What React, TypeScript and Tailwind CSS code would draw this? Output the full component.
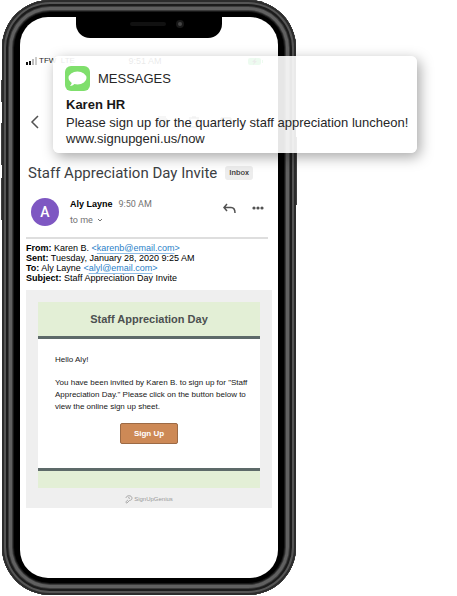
import type { ReactNode } from "react";

const SANS = "font-['Liberation_Sans',Arial,sans-serif]";

function StatusBar() {
  return (
    <div className="flex h-3 items-center justify-between pr-2 text-[8px] leading-3 text-neutral-800">
      <div className="flex w-20 items-center gap-[2px]">
        <svg className="h-2 w-[11px]" viewBox="0 0 11 8" aria-hidden="true">
          <rect x="0" y="5" width="2" height="3" fill="#111" />
          <rect x="3" y="4" width="2" height="4" fill="#111" />
          <rect x="6" y="2" width="2" height="6" fill="#bbb" />
          <rect x="9" y="0" width="2" height="8" fill="#ccc" />
        </svg>
        <span>TFW&nbsp; LTE</span>
      </div>
      <span className="text-[9px]">9:51 AM</span>
      <div className="flex w-20 justify-end">
        <svg className="h-[7px] w-4" viewBox="0 0 16 7" aria-hidden="true">
          <rect width="13" height="7" rx="2" fill="#4cd964" />
          <rect x="14" y="2" width="1" height="3" fill="#4cd964" />
          <path d="M8 0L4 4h2L5 7l4-4H7z" fill="#333" />
        </svg>
      </div>
    </div>
  );
}

function Toolbar() {
  return (
    <div className="flex h-5 items-center justify-between pl-1 pr-10 text-neutral-600">
      <button type="button" aria-label="Back" className="flex size-4 items-center">
        <svg className="h-[14px] w-[9px]" viewBox="0 0 9 14" fill="none" stroke="currentColor" strokeWidth="1.5" aria-hidden="true">
          <path d="M8 1L2 7l6 6" />
        </svg>
      </button>
      <div className="flex gap-5">
        <button type="button" aria-label="Archive">
          <svg className="size-3" viewBox="0 0 12 12" fill="none" stroke="currentColor" aria-hidden="true">
            <path d="M1 3h10v8H1zM2 1h8M6 5v4M4 7l2 2 2-2" />
          </svg>
        </button>
        <button type="button" aria-label="Delete">
          <svg className="size-3" viewBox="0 0 12 12" fill="none" stroke="currentColor" aria-hidden="true">
            <path d="M1 2h10M4 1h4M2 3v8h8V3" />
          </svg>
        </button>
        <button type="button" aria-label="Mark unread">
          <svg className="size-3" viewBox="0 0 12 12" fill="none" stroke="currentColor" aria-hidden="true">
            <path d="M1 2h10v8H1zM1 3l5 4 5-4" />
          </svg>
        </button>
      </div>
    </div>
  );
}

function Sender() {
  return (
    <div className="flex items-center pl-[5px] pr-2">
      <div className="flex size-7 shrink-0 items-center justify-center rounded-full bg-[#7e57c2] font-[Roboto,sans-serif] text-sm font-medium text-white">
        A
      </div>
      <div className="ml-[11px] flex-1">
        <div className="flex items-center gap-[6px] text-[9px] leading-4">
          <span className="font-bold text-black">Aly Layne</span>
          <span className="font-[Roboto,sans-serif] text-neutral-500">9:50 AM</span>
        </div>
        <button type="button" className="flex h-4 items-center gap-1 font-[Roboto,sans-serif] text-[9px] leading-4 text-neutral-500">
          to me
          <svg className="h-1 w-[6px]" viewBox="0 0 6 4" fill="none" stroke="currentColor" aria-hidden="true">
            <path d="M1 1l2 2 2-2" />
          </svg>
        </button>
      </div>
      <div className="flex items-center gap-4 pb-2 text-neutral-600">
        <button type="button" aria-label="Reply">
          <svg className="h-[11px] w-[14px]" viewBox="0 0 14 11" fill="none" stroke="currentColor" strokeWidth="1.5" aria-hidden="true">
            <path d="M5 1L2 4.500l3 3.500M2 4.500h7c3 0 4 2 4 5.500" />
          </svg>
        </button>
        <button type="button" aria-label="More">
          <svg className="h-[4px] w-3" viewBox="0 0 12 4" fill="currentColor" aria-hidden="true">
            <circle cx="2" cy="2" r="1.6" />
            <circle cx="6" cy="2" r="1.6" />
            <circle cx="10" cy="2" r="1.6" />
          </svg>
        </button>
      </div>
    </div>
  );
}

function Field({ label, children }: { label: string; children: ReactNode }) {
  return (
    <p>
      <b>{label}:</b> {children}
    </p>
  );
}

function Address({ email }: { email: string }) {
  return (
    <span className="text-[#2a7fc9]">
      &lt;
      <a href={`mailto:${email}`} className="underline decoration-[#8fbde6] underline-offset-2">
        {email}
      </a>
      &gt;
    </span>
  );
}

function Invitation() {
  return (
    <section className="mt-[7px] bg-[#efefef] px-3 pt-3">
      <div className="bg-white">
        <h2 className="border-b-[3px] border-[#5d6a69] bg-[#e3efd6] text-center text-[11px] font-bold leading-[34px] text-[#4c5050]">
          Staff Appreciation Day
        </h2>
        <div className="px-[17px] pb-6 pt-[15px] text-[8px] leading-[12px] text-neutral-900">
          <p>Hello Aly!</p>
          <p className="mt-[11px] whitespace-nowrap">
            You have been invited by Karen B. to sign up for "Staff
            <br />
            Appreciation Day." Please click on the button below to
            <br />
            view the online sign up sheet.
          </p>
          <button
            type="button"
            className="mx-auto mt-[10px] block h-[21px] w-[58px] rounded-[2px] border border-[#9c6a45] bg-[#cd8956] text-[8px] font-bold text-white"
          >
            Sign Up
          </button>
        </div>
        <div className="h-5 border-t-[3px] border-[#5d6a69] bg-[#e3efd6]" />
      </div>
      <div className="flex h-5 items-center justify-center gap-px pt-[2px] text-[#999]">
        <svg className="h-[9px] w-2" viewBox="0 0 8 9" fill="none" stroke="currentColor" strokeWidth="0.8" aria-hidden="true">
          <path d="M1 3c0-3 6-3 6 0S4 5 4 6L2 8C0 8 1 6 3 5M3 3c1-1 2 0 1 1" />
        </svg>
        <span className="text-[6px] leading-none">SignUpGenius</span>
      </div>
    </section>
  );
}

function Phone() {
  return (
    <div className="relative w-full max-w-[294px] rounded-[48px] bg-black px-[18px] py-[17px] shadow-[inset_0_0_0_2px_#2c2c2c,inset_0_0_0_4px_#555,inset_0_0_0_6px_#1c1c1c,inset_0_0_0_7px_#3c3c3c,inset_0_0_0_10px_#606060,inset_0_0_0_11px_#3a3a3a,inset_0_0_0_12px_#181818]">
      <div className="absolute -left-px top-[80px] h-[22px] w-px bg-neutral-700" />
      <div className="absolute -left-px top-[123px] h-[42px] w-px bg-neutral-700" />
      <div className="absolute -left-px top-[178px] h-[42px] w-px bg-neutral-700" />
      <div className="absolute -right-px top-[137px] h-[68px] w-px bg-neutral-700" />
      <div className="relative rounded-[28px] bg-white px-[6px] pb-[70px]">
        <div className="absolute left-1/2 top-0 h-[21px] w-[146px] -translate-x-1/2 rounded-b-[14px] bg-black">
          <div className="absolute left-[54px] top-[5px] h-1 w-[36px] rounded-full bg-[#111]" />
          <div className="absolute left-[100px] top-[3px] size-2 rounded-full bg-[#181818] p-[2px]">
            <div className="size-1 rounded-full bg-[#444]" />
          </div>
        </div>
        <div className="pt-[38px]">
          <StatusBar />
          <div className="pt-[45px]">
            <Toolbar />
          </div>
          <div className="flex items-center gap-2 pl-[2px] pt-[29px]">
            <h1 className="whitespace-nowrap font-[Roboto,sans-serif] text-[15px] leading-6 text-[#3c4043]">
              Staff Appreciation Day Invite
            </h1>
            <span className="rounded-[3px] bg-[#ededed] px-1 font-[Roboto,sans-serif] text-[8px] font-medium leading-[14px] text-neutral-700">
              Inbox
            </span>
          </div>
          <div className="pt-[11px]">
            <Sender />
          </div>
          <hr className="mr-1 mt-[9px] border-t-2 border-[#dedede]" />
          <div className="mt-1 text-[9px] leading-[10px] text-black">
            <Field label="From">
              Karen B. <Address email="karenb@email.com" />
            </Field>
            <Field label="Sent">Tuesday, January 28, 2020 9:25 AM</Field>
            <Field label="To">
              Aly Layne <Address email="alyl@email.com" />
            </Field>
            <Field label="Subject">Staff Appreciation Day Invite</Field>
          </div>
          <Invitation />
        </div>
      </div>
    </div>
  );
}

function Notification() {
  return (
    <aside className="absolute left-[53px] top-14 rounded-[6px] bg-white/90 pb-[6px] pl-[13px] pr-[9px] pt-[10px] text-neutral-800 shadow-[3px_4px_14px_rgba(0,0,0,0.35)]">
      <div className="-ml-px flex items-center gap-2">
        <div className="flex size-[25px] items-center justify-center rounded-[6px] bg-[#7fdf6c]">
          <svg className="h-4 w-[19px]" viewBox="0 0 19 16" fill="white" aria-hidden="true">
            <ellipse cx="9.5" cy="7" rx="9" ry="6.5" />
            <path d="M4 10c0 2-1 4-2 5 2 0 4-1 5-3z" />
          </svg>
        </div>
        <span className="text-[13px]">MESSAGES</span>
      </div>
      <p className="mt-1 text-[13px] font-bold leading-[20px] text-neutral-900">Karen HR</p>
      <p className="whitespace-nowrap text-[13px] leading-4">
        Please sign up for the quarterly staff appreciation luncheon!
        <br />
        www.signupgeni.us/now
      </p>
    </aside>
  );
}

export default function App() {
  return (
    <main className={`relative min-h-screen overflow-hidden bg-white pl-[2px] ${SANS}`}>
      <Phone />
      <Notification />
    </main>
  );
}
